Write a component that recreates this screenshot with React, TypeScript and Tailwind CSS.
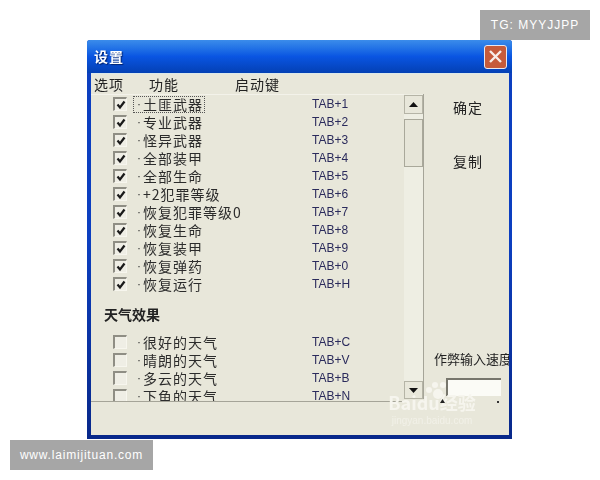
const font = "font-['Noto_Sans_CJK_SC','Noto_Sans',sans-serif]";

const cheats = [
  ['土匪武器', 'TAB+1'],
  ['专业武器', 'TAB+2'],
  ['怪异武器', 'TAB+3'],
  ['全部装甲', 'TAB+4'],
  ['全部生命', 'TAB+5'],
  ['+2犯罪等级', 'TAB+6'],
  ['恢复犯罪等级0', 'TAB+7'],
  ['恢复生命', 'TAB+8'],
  ['恢复装甲', 'TAB+9'],
  ['恢复弹药', 'TAB+0'],
  ['恢复运行', 'TAB+H'],
];

const weather = [
  ['很好的天气', 'TAB+C'],
  ['晴朗的天气', 'TAB+V'],
  ['多云的天气', 'TAB+B'],
  ['下鱼的天气', 'TAB+N'],
];

function Row({ label, hotkey, checked, focused }: { label: string; hotkey: string; checked?: boolean; focused?: boolean }) {
  return (
    <div className="flex h-[18px] shrink-0 items-center pl-[22px]">
      <div className="flex h-[14px] w-[14px] shrink-0 items-center justify-center border-t-2 border-l-2 border-t-[#8f8e84] border-l-[#8f8e84] border-r border-b border-r-[#f7f6ee] border-b-[#f7f6ee] bg-[#efeee5]">
        {checked && (
          <svg width="10" height="10" viewBox="0 0 10 10">
            <path d="M1.5 4.5 L4 7.5 L8.5 1.5" fill="none" stroke="#1a1a1a" strokeWidth="2.2" />
          </svg>
        )}
      </div>
      <div className="ml-[6px] w-[179px] shrink-0">
        <div className={`flex h-[17px] w-fit items-center pb-[1px] pr-[1px] ${focused ? 'border border-dotted border-[#555]' : 'border border-transparent'}`}>
          <span className="ml-[3px] w-[6px] font-['Liberation_Sans',sans-serif] text-[12px] leading-none text-[#333]">·</span>
          <span className="text-[14px] leading-none tracking-[1px] text-[#2c2c2c] whitespace-nowrap">{label}</span>
        </div>
      </div>
      <span className="font-['Liberation_Sans',sans-serif] text-[12px] leading-none text-[#2b2b5c]">{hotkey}</span>
    </div>
  );
}

function ScrollBar() {
  return (
    <div className="flex h-[305px] w-[20px] shrink-0 flex-col border-r border-[#a5a498] bg-[#eeeee3] pt-[1px]">
      <div className="flex h-[19px] shrink-0 items-center justify-center border border-[#b5b4a6] bg-[#e8e7da]">
        <svg width="9" height="5" viewBox="0 0 9 5"><path d="M4.5 0 L9 5 H0 Z" fill="#111" /></svg>
      </div>
      <div className="mt-[5px] h-[48px] shrink-0 border border-[#a9a89a] bg-[#e6e5d8]" />
      <div className="flex-1" />
      <div className="flex h-[18px] shrink-0 items-center justify-center border border-[#b5b4a6] bg-[#e8e7da]">
        <svg width="9" height="5" viewBox="0 0 9 5"><path d="M0 0 H9 L4.5 5 Z" fill="#111" /></svg>
      </div>
    </div>
  );
}

export default function App() {
  return (
    <div className={`flex h-[480px] w-[600px] flex-col overflow-hidden bg-white ${font}`}>
      <div className="flex h-[40px] shrink-0 items-end justify-end pr-[10px]">
        <div className="flex h-[30px] w-[110px] items-center justify-center bg-[#a6a6a6] font-['Liberation_Sans',sans-serif] text-[12px] tracking-[1px] text-white">
          TG: MYYJJPP
        </div>
      </div>

      <div className="relative ml-[87px] flex h-[399px] w-[425px] shrink-0 flex-col rounded-t-[3px] bg-gradient-to-b from-[#0c3fc0] via-[#0c3fc0] to-[#08288a] blur-[0.4px]">
        <div className="flex h-[33px] shrink-0 items-center justify-between rounded-t-[3px] bg-gradient-to-b from-[#3b8cea] via-[#0a55e2] to-[#0440b4] pl-[7px] pr-[5px]">
          <span className="text-[14px] font-bold tracking-[1px] text-white [text-shadow:1px_1px_1px_#03236e]">设置</span>
          <div className="flex h-[24px] w-[23px] items-center justify-center rounded-[3px] border border-[#e8e8f0] bg-[#c65b3b]">
            <svg width="15" height="15" viewBox="0 0 15 15">
              <path d="M2 2 L13 13 M13 2 L2 13" stroke="#f7eee8" strokeWidth="2.4" />
            </svg>
          </div>
        </div>

        <div className="mb-[4px] ml-[4px] mr-[3px] flex flex-1 flex-col border-t border-[#dbe8ea] bg-[#e8e7da] text-[#222]">
          <div className="flex h-[20px] shrink-0 items-center pl-[3px] text-[14px] leading-none tracking-[1px] text-[#222]">
            <span className="w-[55px]">选项</span>
            <span className="w-[86px]">功能</span>
            <span>启动键</span>
          </div>

          <div className="flex h-[308px] shrink-0">
            <div className="flex w-[333px] shrink-0">
              <div className="flex h-[308px] w-[313px] shrink-0 flex-col overflow-hidden border-t border-b border-t-[#f3f2ea] border-b-[#a5a498]">
                {cheats.map(([label, hotkey], i) => (
                  <Row key={label} label={label} hotkey={hotkey} checked focused={i === 0} />
                ))}
                <div className="flex h-[40px] shrink-0 items-start pl-[13px] pt-[11px] text-[14px] font-bold leading-[20px] text-[#222]">
                  天气效果
                </div>
                {weather.map(([label, hotkey]) => (
                  <Row key={label} label={label} hotkey={hotkey} />
                ))}
              </div>
              <ScrollBar />
            </div>
            <div className="flex min-w-0 flex-1 flex-col overflow-hidden">
              <span className="ml-[29px] mt-[3px] text-[14px] leading-[20px] tracking-[1px]">确定</span>
              <span className="ml-[29px] mt-[34px] text-[14px] leading-[20px] tracking-[1px]">复制</span>
              <span className="ml-[10px] mt-[178px] whitespace-nowrap text-[13px] leading-[20px]">作弊输入速度</span>
              <div className="ml-[22px] mt-[9px] h-[18px] w-[55px] border-t-2 border-l-2 border-t-[#77766c] border-l-[#77766c] bg-[#fbfbf6]" />
            </div>
          </div>
        </div>

        {/* baidu watermark */}
        <div className="absolute left-[295px] top-[352px] flex w-[100px] flex-col items-center text-[#f6f5ee]">
          <span className="text-[18px] font-bold leading-[20px]">Baidu经验</span>
          <span className="font-['Liberation_Sans',sans-serif] text-[10px] leading-[18px] opacity-70">jingyan.baidu.com</span>
        </div>
        <svg className="absolute left-[338px] top-[342px]" width="24" height="18" viewBox="0 0 24 18">
          <circle cx="4" cy="8" r="3" fill="#f6f5ee" />
          <circle cx="10" cy="3" r="3" fill="#f6f5ee" />
          <circle cx="18" cy="3" r="3" fill="#f6f5ee" />
          <circle cx="13" cy="12" r="5" fill="#f6f5ee" />
        </svg>
        <svg className="absolute left-[353px] top-[359px]" width="5" height="4" viewBox="0 0 5 4"><path d="M2.5 0 L5 4 H0 Z" fill="#222" /></svg>
        <div className="absolute left-[410px] top-[361px] h-[2px] w-[2px] bg-[#333]" />
      </div>

      <div className="ml-[10px] mt-[1px] flex h-[30px] w-[143px] shrink-0 items-center justify-center bg-[#a6a6a6] font-['Liberation_Sans',sans-serif] text-[12px] tracking-[0.8px] text-white">
        www.laimijituan.com
      </div>
    </div>
  );
}
